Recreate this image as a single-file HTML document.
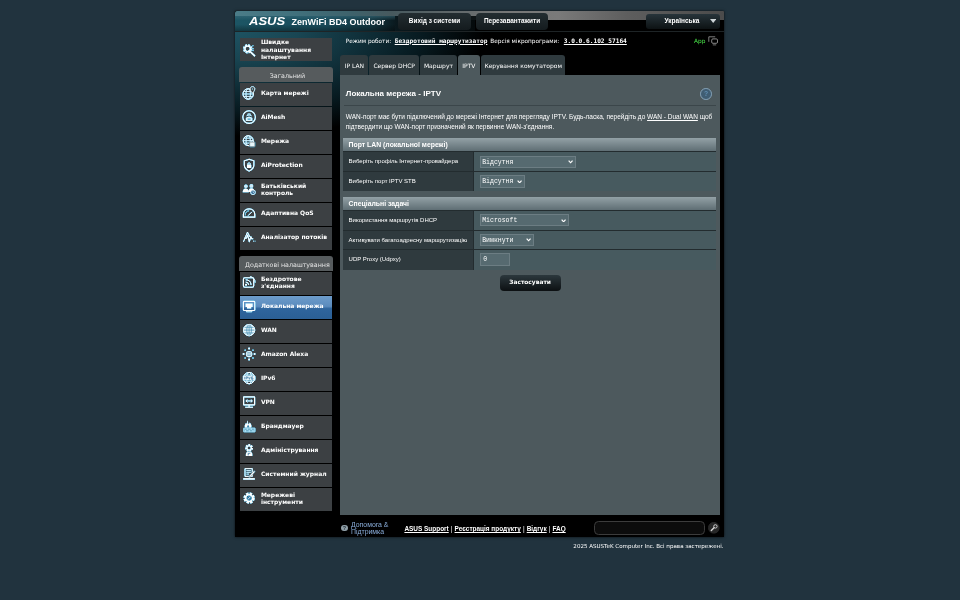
<!DOCTYPE html>
<html lang="uk">
<head>
<meta charset="utf-8">
<title>ASUS Wireless Router ZenWiFi BD4 Outdoor - IPTV</title>
<style>
html,body{margin:0;padding:0;}
body{width:960px;height:600px;overflow:hidden;background:#21333e;position:relative;font-family:"DejaVu Sans","Liberation Sans",sans-serif;color:#fff;}
.abs{position:absolute;}
#wrap{left:235px;top:11px;width:489.2px;height:526px;background:#000;box-shadow:0 0 2.5px rgba(0,0,0,.75);overflow:hidden;}
/* header */
#hdr{left:0;top:0;width:490px;height:8.6px;background:linear-gradient(90deg,#4b7c88 0%,#41717d 12%,#3e626b 24%,#47595e 32%,#5f6769 44%,#767777 56%,#7a7a7a 66%,#5e5e5e 80%,#4b4b4b 100%);border-radius:2px 2px 0 0;}
#hdr2{left:0;top:5.1px;width:490px;height:14.9px;background:linear-gradient(90deg,#1c5564 0%,#194d5c 18%,#12353f 28%,rgba(10,24,29,1) 33%,rgba(4,10,12,.9) 50%,rgba(0,0,0,0) 50.1%);}
#hdr3{left:0;top:5.1px;width:160px;height:14.9px;background:linear-gradient(180deg,rgba(60,110,125,.55) 0%,rgba(30,80,95,.0) 30%,rgba(0,0,0,0) 55%,rgba(0,0,0,.35) 100%);}
#hdr4{left:240px;top:8.6px;width:250px;height:11.4px;background:#000;}
#hdrline{left:0;top:19.7px;width:490px;height:0.7px;background:#1e2426;}
#glow{left:0;top:20.4px;width:260px;height:130px;background:radial-gradient(ellipse 250px 105px at 0 0,#1e5362 0%,#194653 25%,#10303a 50%,#071a20 75%,#000 100%);}
#logo{left:13.6px;top:4.3px;}
#model{left:56.6px;top:5.7px;font:bold 9px "Liberation Sans",sans-serif;white-space:nowrap;letter-spacing:0;}
.tbtn{top:1.8px;height:17.6px;background:linear-gradient(#232d31,#141b1e);border-radius:4px;font-family:"Liberation Sans",sans-serif;font-weight:bold;font-size:6.45px;text-align:center;line-height:16.6px;white-space:nowrap;}
#lang{left:410.5px;top:3px;width:74.5px;height:14.5px;background:linear-gradient(#27343a,#0d1214);border-radius:3px;font-family:"Liberation Sans",sans-serif;font-weight:bold;font-size:6.5px;line-height:14px;}
/* sidebar */
.mi{left:4.7px;width:92.3px;height:23.3px;background:#3c4043;font-weight:bold;font-size:5.97px;line-height:7.3px;}
.mi span{position:absolute;left:21.2px;top:44.5%;transform:translateY(-50%);white-space:nowrap;}
.mi svg{position:absolute;left:2.8px;top:3.4px;width:14.2px;height:14.2px;filter:drop-shadow(0 0 .7px #45b4e2) drop-shadow(0 0 .3px #45b4e2);}
.mi span.two{top:44.5%;}
.mi.qs svg{top:5.2px;}
.mi.qs span{top:50%;line-height:7.4px;}
.mi.sel{background:linear-gradient(#6d9ccb 0%,#5b8bbd 45%,#2f659d 55%,#2b5f95 100%);}
.mh{left:4px;width:94px;box-sizing:border-box;padding-left:2.8px;height:15px;background:#565b5d;border-radius:3px 3px 0 0;font-size:6.33px;color:#e4e4e4;text-align:center;line-height:17.6px;white-space:nowrap;}
/* main */
#info{left:110.8px;top:24.5px;font-size:5.75px;line-height:10px;white-space:nowrap;}
#info span,#info b{top:0;}
#info b{font-family:"DejaVu Sans Mono","Liberation Mono",monospace;font-size:6.17px;text-decoration:underline;}
.tab{top:44px;height:19.8px;background:#2f3a3e;border-radius:3px 3px 0 0;font-size:6px;text-align:center;line-height:21.6px;white-space:nowrap;color:#fff;}
.tab.sel{background:#4d595d;}
#content{left:105.3px;top:63.7px;width:379.5px;height:440.7px;background:#4d595d;}
#title{left:5.5px;top:14.4px;font:bold 8px "Liberation Sans",sans-serif;white-space:nowrap;}
#hr{left:4px;top:30.7px;width:372px;height:0.8px;background:#3b464a;}
#desc{left:5.5px;top:37.4px;width:372px;font:6.51px/10px "Liberation Sans",sans-serif;}
#desc u{text-decoration:underline;}
.thead{left:3px;width:372.6px;height:13.3px;background:linear-gradient(#93a1a6,#5f6e74);font:bold 6.87px/13.3px "Liberation Sans",sans-serif;text-indent:5.3px;white-space:nowrap;}
.row{left:3px;width:372.6px;height:19.7px;background:#475a5f;border-top:0.7px solid #232c2f;box-sizing:border-box;}
.row .th{position:absolute;left:0;top:0;width:130.3px;height:100%;background:#2f3a3e;border-right:0.7px solid #232c2f;box-sizing:border-box;font:6px/19px "Liberation Sans",sans-serif;text-indent:5.3px;white-space:nowrap;}
.sel2,.inp{position:absolute;left:136.6px;height:11.7px;background:#566a70;border:0.6px solid #6c7d83;box-sizing:border-box;font:6.5px/12.2px "Liberation Mono",monospace;white-space:nowrap;padding-left:1.3px;}
.sel2 svg{position:absolute;right:1.9px;top:3.3px;width:5.2px;height:3.6px;}
#apply{left:159.3px;top:200.3px;width:61px;height:16px;background:linear-gradient(#2c383d,#0c1012);border-radius:4px;font-weight:bold;font-size:5.9px;line-height:15.6px;text-align:center;}
/* footer */
#help{left:116px;top:509.6px;font:6.9px/7.4px "Liberation Sans",sans-serif;color:#8aaedb;white-space:nowrap;}
#links{left:169.4px;top:512.9px;font:bold 6.45px/9px "Liberation Sans",sans-serif;white-space:nowrap;}
#links u{text-decoration:underline;}
#links i{font-style:normal;font-weight:normal;padding:0 .28px;}
#search{left:359.3px;top:510.2px;width:110.8px;height:13.5px;border:0.8px solid #3c3c3c;border-radius:4.5px;background:#0c0c0c;box-sizing:border-box;}
#copy{will-change:transform;left:235px;top:542px;width:488.5px;text-align:right;font-size:5.54px;line-height:8px;white-space:nowrap;}
</style>
</head>
<body>
<div id="wrap" class="abs"><div id="fg" class="abs" style="left:0;top:0;width:100%;height:100%;will-change:transform;">
  <div id="hdr" class="abs"></div>
  <div id="hdr2" class="abs"></div>
  <div id="hdr3" class="abs"></div>
  <div id="hdr4" class="abs"></div>
  <div id="glow" class="abs"></div>
  <div id="hdrline" class="abs"></div>
  <svg id="logo" class="abs" width="40" height="12" viewBox="0 0 40 12"><text x="0" y="9.6" font-family="Liberation Sans, sans-serif" font-weight="bold" font-style="italic" font-size="11.6" fill="#fff" textLength="36.2" lengthAdjust="spacingAndGlyphs">ASUS</text></svg>
  <div id="model" class="abs">ZenWiFi BD4 Outdoor</div>
  <div class="abs tbtn" style="left:163.3px;width:72.3px;">Вихід з системи</div>
  <div class="abs tbtn" style="left:240.8px;width:72.5px;">Перезавантажити</div>
  <div id="lang" class="abs"><span class="abs" style="left:19px;">Українська</span><svg class="abs" style="left:64.4px;top:5.2px" width="6.4" height="4" viewBox="0 0 6.4 4"><path d="M0 0H6.4L3.2 4Z" fill="#cfd6d9"/></svg></div>

  <!-- sidebar -->
  <div class="abs mi qs" style="top:27.2px;height:22.6px;"><svg viewBox="0 0 16 16"><circle cx="6.4" cy="6.6" r="3.9" stroke="#e6f6fc" stroke-width="2.6" fill="none" stroke-dasharray="2 1.06"/><circle cx="6.4" cy="6.6" r="3.1" stroke="#fff" stroke-width="1.3" fill="none"/><path d="M7.6 8.2L14.6 14.8" stroke="#fff" stroke-width="1.7"/><path d="M9.8 5.6L13.4 6.6M10.4 8.4L13.4 8.6M11.4 3.4L13 3" stroke="#9fd8ee" stroke-width=".8"/></svg><span>Швидке<br>налаштування<br>Інтернет</span></div>
  <div class="abs mh" style="top:56px;">Загальний</div>
  <div class="abs mi" style="top:71.5px;"><svg viewBox="0 0 16 16"><circle cx="7" cy="9" r="5.9" stroke="#fff" stroke-width="1.1" fill="none"/><ellipse cx="7" cy="9" rx="2.5" ry="5.9" stroke="#fff" stroke-width=".8" fill="none"/><path d="M1.1 9H12.9M2.2 6.2H11.8M2.2 11.8H11.8" stroke="#fff" stroke-width=".8"/><path d="M11.8 .8C10.1 .8 9.2 2.1 9.2 3.4C9.2 5.2 11.8 8 11.8 8S14.4 5.2 14.4 3.4C14.4 2.1 13.5 .8 11.8 .8Z" fill="#3c4043" stroke="#fff" stroke-width=".9"/><circle cx="11.8" cy="3.4" r=".9" fill="#8fd4ee"/></svg><span>Карта мережі</span></div>
  <div class="abs mi" style="top:95.5px;"><svg viewBox="0 0 16 16"><circle cx="8" cy="8" r="7.1" stroke="#fff" stroke-width="1.2" fill="none"/><path d="M4.4 12.4V9Q8 6.4 11.6 9V12.4Z" fill="#dff3fb"/><path d="M5.2 6.6Q8 4.4 10.8 6.6M6 4.9Q8 3.7 10 4.9" stroke="#fff" stroke-width=".8" fill="none"/><rect x="6.3" y="9.6" width="3.4" height="1.4" fill="#3aa0c8"/></svg><span>AiMesh</span></div>
  <div class="abs mi" style="top:119.5px;"><svg viewBox="0 0 16 16"><circle cx="7" cy="7.5" r="5.6" stroke="#fff" stroke-width="1.1" fill="none"/><ellipse cx="7" cy="7.5" rx="2.4" ry="5.6" stroke="#fff" stroke-width=".8" fill="none"/><path d="M1.4 7.5H12.6M2.3 4.7H11.7M2.3 10.3H11.7" stroke="#fff" stroke-width=".8"/><rect x="8.6" y="9" width="6" height="5.4" rx=".8" fill="#e8f6fb" stroke="#3c4043" stroke-width=".6"/><path d="M10.3 9V8Q11.6 6.6 12.9 8V9" stroke="#fff" stroke-width=".8" fill="none"/></svg><span>Мережа</span></div>
  <div class="abs mi" style="top:143.5px;"><svg viewBox="0 0 16 16"><path d="M8 1.4L13.4 3.2V8C13.4 11.4 10.6 13.6 8 14.8C5.4 13.6 2.6 11.4 2.6 8V3.2Z" stroke="#fff" stroke-width="1.2" fill="none"/><rect x="5.6" y="7.4" width="4.8" height="4" rx=".6" fill="#fff"/><path d="M6.6 7.4V6.2Q8 4.6 9.4 6.2V7.4" stroke="#fff" stroke-width=".9" fill="none"/></svg><span>AiProtection</span></div>
  <div class="abs mi" style="top:167.5px;"><svg viewBox="0 0 16 16"><circle cx="4.4" cy="4.8" r="2" fill="#cfeaf6"/><circle cx="10.6" cy="4.4" r="2.1" fill="#cfeaf6"/><path d="M.8 11.6Q1 7.4 4.4 7.4Q7 7.4 7.6 10.4V11.6Z" fill="#fff"/><path d="M7 11.4Q7.4 7 10.6 7Q13.8 7 14.2 11.4Z" fill="#fff"/><circle cx="12.4" cy="11.6" r="2.6" fill="#2f6f9c" stroke="#fff" stroke-width=".9"/><path d="M12.4 10.2V11.8H13.6" stroke="#fff" stroke-width=".6" fill="none"/></svg><span class="two">Батьківський<br>контроль</span></div>
  <div class="abs mi" style="top:191.5px;"><svg viewBox="0 0 16 16"><path d="M1.6 12.6V9.6C1.6 5.6 4.4 3.2 8 3.2S14.4 5.6 14.4 9.6V12.6Z" stroke="#fff" stroke-width="1.3" fill="none" stroke-linejoin="round"/><path d="M3.6 10.6C3.6 7.4 5.6 5.4 8 5.4" stroke="#9fd8ee" stroke-width=".8" fill="none"/><path d="M7 10.8L11.2 6.6" stroke="#fff" stroke-width="1.1"/></svg><span>Адаптивна QoS</span></div>
  <div class="abs mi" style="top:215.5px;"><svg viewBox="0 0 16 16"><path d="M1.6 13.4L6.2 2.4L9 8" stroke="#fff" stroke-width="1.1" fill="none"/><path d="M2.6 9.2H5L6.4 5.6L8.2 13.2L10 7.6L11 9.8H12.6" stroke="#fff" stroke-width="1.2" fill="none" stroke-linejoin="round"/><path d="M12.6 12.6H13.4M14.4 12.6H15" stroke="#fff" stroke-width="1"/></svg><span>Аналізатор потоків</span></div>
  <div class="abs mh" style="top:245.3px;">Додаткові налаштування</div>
  <div class="abs mi" style="top:260.7px;"><svg viewBox="0 0 16 16"><rect x="1.6" y="3.2" width="11.6" height="10.6" rx="1.6" stroke="#fff" stroke-width="1.2" fill="none"/><circle cx="4.6" cy="11" r="1.2" fill="#fff"/><path d="M4.2 8Q7.4 8 7.6 11.2M4.2 5.4Q10 5.6 10.2 11.2" stroke="#fff" stroke-width="1.1" fill="none"/><path d="M9 1.8Q14.6 2.6 14.8 8.6" stroke="#fff" stroke-width="1" fill="none"/></svg><span class="two">Бездротове<br>з'єднання</span></div>
  <div class="abs mi sel" style="top:284.7px;"><svg viewBox="0 0 16 16"><rect x="1.6" y="2.6" width="12.8" height="10.4" rx="1" stroke="#fff" stroke-width="1.3" fill="none"/><path d="M4 5H12V9H10.4V10.8H5.6V9H4Z" fill="#fff"/><path d="M5 13V14.4H11V13" stroke="#fff" stroke-width=".9" fill="none"/></svg><span>Локальна мережа</span></div>
  <div class="abs mi" style="top:308.7px;"><svg viewBox="0 0 16 16"><circle cx="8" cy="8" r="6.4" fill="#e9f6fb"/><ellipse cx="8" cy="8" rx="2.6" ry="6.4" stroke="#3a86ad" stroke-width=".8" fill="none"/><path d="M1.6 8H14.4M2.6 4.8H13.4M2.6 11.2H13.4M8 1.6V14.4" stroke="#3a86ad" stroke-width=".8"/><circle cx="8" cy="8" r="6.4" stroke="#fff" stroke-width=".9" fill="none"/></svg><span>WAN</span></div>
  <div class="abs mi" style="top:332.7px;"><svg viewBox="0 0 16 16"><circle cx="8" cy="8" r="3.6" fill="#e9f6fb"/><path d="M5.4 8H10.6M6 6.4H10M6 9.6H10" stroke="#3a86ad" stroke-width=".7"/><circle cx="8" cy="1.8" r="1.1" fill="#fff"/><circle cx="8" cy="14.2" r="1.1" fill="#fff"/><circle cx="1.8" cy="8" r="1.1" fill="#fff"/><circle cx="14.2" cy="8" r="1.1" fill="#fff"/><circle cx="3.6" cy="3.6" r=".9" fill="#9fd8ee"/><circle cx="12.4" cy="3.6" r=".9" fill="#9fd8ee"/><circle cx="3.6" cy="12.4" r=".9" fill="#9fd8ee"/><circle cx="12.4" cy="12.4" r=".9" fill="#9fd8ee"/></svg><span>Amazon Alexa</span></div>
  <div class="abs mi" style="top:356.7px;"><svg viewBox="0 0 16 16"><circle cx="8" cy="8" r="6.4" stroke="#fff" stroke-width="1.1" fill="none"/><ellipse cx="8" cy="8" rx="2.8" ry="6.4" stroke="#fff" stroke-width=".8" fill="none"/><path d="M2.6 4.6H13.4M2.6 11.6H13.4" stroke="#fff" stroke-width=".8"/><rect x="1" y="5.6" width="14" height="4.8" fill="#e9f6fb"/><path d="M3 6.6V9.4M4.6 9.4V6.6H6.2V8H4.6M7.4 6.6L8.4 9.4L9.4 6.6M12.4 6.6H10.8V9.4H12.4V8H10.8" stroke="#2f6f9c" stroke-width=".7" fill="none"/></svg><span>IPv6</span></div>
  <div class="abs mi" style="top:380.7px;"><svg viewBox="0 0 16 16"><rect x="1.8" y="2.2" width="12.4" height="9" rx=".6" stroke="#fff" stroke-width="1.3" fill="none"/><path d="M4.6 6.7H11.4M6 5.2L4.4 6.7L6 8.2M10 5.2L11.6 6.7L10 8.2" stroke="#fff" stroke-width="1" fill="none"/><path d="M8 11.2V13.4M3.6 13.8H12.4" stroke="#fff" stroke-width="1.3"/></svg><span>VPN</span></div>
  <div class="abs mi" style="top:404.7px;"><svg viewBox="0 0 16 16"><path d="M6 1.6C7.6 3.6 6.2 4.8 7.6 6.2C8.2 5.2 8.6 4.8 8.6 4C10.6 5.8 11 8 10.4 9.6H3.4C2.4 7 4 5.6 4.6 4.2C5.2 5 5.2 5.6 5.6 5.8C6.4 4.4 5.6 3 6 1.6Z" fill="#fff"/><path d="M5.8 9.6C5.4 8.2 6.6 7.6 6.8 6.6C7.8 7.6 8.4 8.6 8 9.6Z" fill="#3a86ad"/><path d="M2 10.4H14.6V14.4H2ZM2 12.4H14.6M6 10.4V12.4M10.4 10.4V12.4M4 12.4V14.4M8.2 12.4V14.4M12.4 12.4V14.4" stroke="#cfeaf6" stroke-width=".8" fill="none"/></svg><span>Брандмауер</span></div>
  <div class="abs mi" style="top:428.7px;"><svg viewBox="0 0 16 16"><circle cx="8" cy="5.6" r="3.2" stroke="#fff" stroke-width="2.4" fill="none" stroke-dasharray="1.7 1.1"/><circle cx="8" cy="5.6" r="2.5" stroke="#fff" stroke-width="1.2" fill="none"/><path d="M4.4 14.6V12.4Q4.6 10 8 10Q11.4 10 11.6 12.4V14.6Z" fill="#fff"/><path d="M7 14V11.6H9.4" stroke="#2f6f9c" stroke-width=".9" fill="none"/></svg><span>Адміністрування</span></div>
  <div class="abs mi" style="top:452.7px;"><svg viewBox="0 0 16 16"><path d="M3.4 1.8H11.6V10.6H3.4Z" stroke="#fff" stroke-width="1.1" fill="none"/><path d="M5 4H10M5 6H10M5 8H8" stroke="#fff" stroke-width=".8"/><path d="M8.2 10.2L13.6 4.2L14.8 5.4L9.6 11.2L7.8 11.8Z" fill="#fff" stroke="#3c4043" stroke-width=".4"/><path d="M1.4 12.4H14.4V14.4H1.4Z" fill="#e9f6fb"/></svg><span>Системний журнал</span></div>
  <div class="abs mi" style="top:476.7px;"><svg viewBox="0 0 16 16"><circle cx="8" cy="8" r="4.8" stroke="#fff" stroke-width="3" fill="none" stroke-dasharray="2.5 1.27"/><circle cx="8" cy="8" r="3.9" stroke="#fff" stroke-width="1.6" fill="none"/><circle cx="8" cy="8" r="2.2" fill="#2f6f9c"/><path d="M6.6 9.6L9.6 6.4" stroke="#fff" stroke-width="1"/></svg><span class="two">Мережеві<br>інструменти</span></div>

  <!-- info line -->
  <div id="info" class="abs"><span class="abs" style="left:0">Режим роботи:</span><b class="abs" style="left:48.9px">Бездротовий маршрутизатор</b><span class="abs" style="left:144.5px">Версія мікропрограми:</span><b class="abs" style="left:218px">3.0.0.6.102_57164</b></div>
  <div class="abs" style="left:459px;top:27.2px;font-size:5.8px;line-height:7px;color:#4ae84a;">App</div>
  <svg class="abs" style="left:472.6px;top:25.1px" width="11" height="10" viewBox="0 0 11 10"><path d="M.8 5.8V.8H7.2" stroke="#9c9c9c" stroke-width=".8" fill="none"/><rect x="3.7" y="2.9" width="5.8" height="4.4" rx="1.2" stroke="#a8a8a8" stroke-width=".8" fill="#000"/><path d="M4.8 8.9H8.2" stroke="#8a8a8a" stroke-width=".8"/></svg>

  <!-- tabs -->
  <div class="abs tab" style="left:105.3px;width:28px;">IP LAN</div>
  <div class="abs tab" style="left:134.2px;width:50px;">Сервер DHCP</div>
  <div class="abs tab" style="left:185.2px;width:36.5px;">Маршрут</div>
  <div class="abs tab sel" style="left:222.8px;width:22.2px;">IPTV</div>
  <div class="abs tab" style="left:246.2px;width:84px;">Керування комутатором</div>

  <div id="content" class="abs">
    <div id="title" class="abs">Локальна мережа - IPTV</div>
    <div class="abs" style="left:359.9px;top:13.6px;width:11.7px;height:11.7px;border-radius:50%;border:1px solid #86a3b8;background:#3f5d73;box-sizing:border-box;font:bold 6.8px/9.8px 'Liberation Sans',sans-serif;color:#5f8db0;text-align:center;">?</div>
    <div id="hr" class="abs"></div>
    <div id="desc" class="abs">WAN-порт має бути підключений до мережі Інтернет для перегляду IPTV. Будь-ласка, перейдіть до <u>WAN - Dual WAN</u> щоб підтвердити що WAN-порт призначений як первинне WAN-з'єднання.</div>

    <div class="abs thead" style="top:63.3px;">Порт LAN (локальної мережі)</div>
    <div class="abs row" style="top:76.6px;height:20px;"><div class="th">Виберіть профіль Інтернет-провайдера</div><div class="sel2" style="top:3.8px;width:96.3px;">Відсутня<svg viewBox="0 0 8 6" preserveAspectRatio="none"><path d="M1 1.2L4 4.6L7 1.2" fill="none" stroke="#fff" stroke-width="1.9"/></svg></div></div>
    <div class="abs row" style="top:96.6px;height:19.5px;"><div class="th">Виберіть порт IPTV STB</div><div class="sel2" style="top:3.2px;width:45.3px;height:12.1px;">Відсутня<svg viewBox="0 0 8 6" preserveAspectRatio="none"><path d="M1 1.2L4 4.6L7 1.2" fill="none" stroke="#fff" stroke-width="1.9"/></svg></div></div>

    <div class="abs thead" style="top:122px;">Спеціальні задачі</div>
    <div class="abs row" style="top:135.3px;"><div class="th">Використання маршрутів DHCP</div><div class="sel2" style="top:3.4px;width:88.7px;">Microsoft<svg viewBox="0 0 8 6" preserveAspectRatio="none"><path d="M1 1.2L4 4.6L7 1.2" fill="none" stroke="#fff" stroke-width="1.9"/></svg></div></div>
    <div class="abs row" style="top:155px;"><div class="th">Активувати багатоадресну маршрутизацію</div><div class="sel2" style="top:3.3px;width:54px;">Вимкнути<svg viewBox="0 0 8 6" preserveAspectRatio="none"><path d="M1 1.2L4 4.6L7 1.2" fill="none" stroke="#fff" stroke-width="1.9"/></svg></div></div>
    <div class="abs row" style="top:174.7px;height:20.3px;"><div class="th">UDP Proxy (Udpxy)</div><div class="inp" style="top:2.2px;width:30px;height:13.2px;line-height:12px;padding-left:2.4px;">0</div></div>

    <div id="apply" class="abs">Застосувати</div>
  </div>

  <!-- footer -->
  <div class="abs" style="left:105.9px;top:513.6px;width:6.8px;height:6.8px;border-radius:50%;background:#8f9ea6;font:bold 5.4px/7px 'Liberation Sans',sans-serif;color:#1b2a33;text-align:center;">?</div>
  <div id="help" class="abs">Допомога &amp;<br>Підтримка</div>
  <div id="links" class="abs"><u>ASUS Support</u><i> | </i><u>Реєстрація продукту</u><i> | </i><u>Відгук</u><i> | </i><u>FAQ</u></div>
  <div id="search" class="abs"></div>
  <svg class="abs" style="left:473.2px;top:511.2px" width="11.6" height="11.6" viewBox="0 0 11.6 11.6"><circle cx="5.8" cy="5.8" r="5.5" fill="#272727" stroke="#333" stroke-width=".5"/><circle cx="7.4" cy="4.4" r="1.7" stroke="#d8d8d8" stroke-width=".9" fill="none"/><path d="M6 5.8L3.3 8.5" stroke="#d8d8d8" stroke-width="1.4" stroke-linecap="round"/></svg>
</div></div>
<div id="copy" class="abs">2025 ASUSTeK Computer Inc. Всі права застережені.</div>
</body>
</html>
